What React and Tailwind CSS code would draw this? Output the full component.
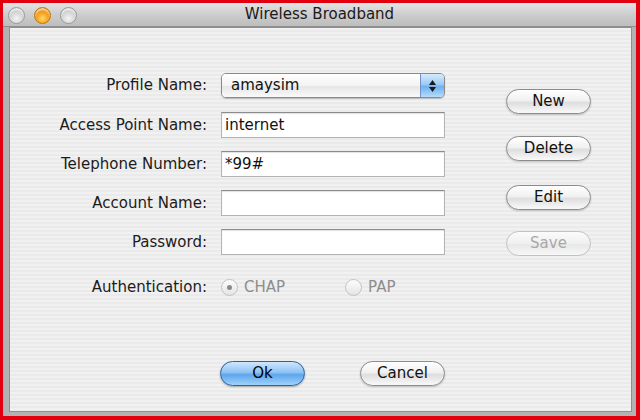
import React from 'react';

const font = { fontFamily: '"DejaVu Sans", Verdana, sans-serif' };

function Light({ orange }) {
  return (
    <span
      className={
        orange
          ? 'block h-[17px] w-[17px] rounded-full border border-[#b9770f] bg-[radial-gradient(circle_at_50%_70%,#ffd66a_0%,#f6a21c_45%,#c86f06_100%)] shadow-[inset_0_2px_2px_rgba(255,255,255,0.7)]'
          : 'block h-[17px] w-[17px] rounded-full border border-[#9a9a9a] bg-[radial-gradient(circle_at_50%_70%,#f4f4f4_0%,#d4d4d4_50%,#a8a8a8_100%)] shadow-[inset_0_2px_2px_rgba(255,255,255,0.8)]'
      }
    />
  );
}

function AquaButton({ children, disabled, primary, className = '' }) {
  const base =
    'flex h-[25px] w-[85px] items-center justify-center rounded-full border text-[15px] leading-none';
  const look = primary
    ? 'border-[#2f5f9e] bg-[linear-gradient(180deg,#cfe7fd_0%,#8ec3f4_45%,#5ea6ec_55%,#9ed2fb_100%)] text-black shadow-[0_1px_2px_rgba(0,0,0,0.3)]'
    : disabled
      ? 'border-[#c2c2c2] bg-[linear-gradient(180deg,#fbfbfb_0%,#f0f0f0_50%,#e8e8e8_55%,#f7f7f7_100%)] text-[#a8a8a8]'
      : 'border-[#8b8b8b] bg-[linear-gradient(180deg,#ffffff_0%,#f1f1f1_45%,#dedede_55%,#f9f9f9_100%)] text-[#111] shadow-[0_1px_2px_rgba(0,0,0,0.2)]';
  return (
    <button type="button" className={`${base} ${look} ${className}`}>
      {children}
    </button>
  );
}

function Row({ label, children, className = '' }) {
  return (
    <div className={`flex items-center ${className}`}>
      <span className="w-[197px] text-right text-[15px] text-[#1c1c1c]">{label}</span>
      <div className="ml-[14px] w-[224px]">{children}</div>
    </div>
  );
}

function Field({ value }) {
  return (
    <div className="flex h-[26px] items-center border border-[#b4b4b4] border-t-[#8c8c8c] bg-white pl-[3px] text-[15px] text-[#111] shadow-[inset_0_1px_1px_rgba(0,0,0,0.12)]">
      {value}
    </div>
  );
}

function Radio({ checked, label }) {
  return (
    <div className="flex items-center gap-[6px] text-[15px] text-[#8d8d8d]">
      <span className="flex h-[17px] w-[17px] items-center justify-center rounded-full border border-[#c3c3c3] bg-[linear-gradient(180deg,#fdfdfd,#e4e4e4)]">
        {checked && <span className="h-[5px] w-[5px] rounded-full bg-[#8a8a8a]" />}
      </span>
      {label}
    </div>
  );
}

export default function App() {
  return (
    <div className="h-[420px] w-[640px] bg-[#e2000e] pb-[4px] pl-[3px] pr-[4px] pt-[3px]" style={font}>
      <div className="flex h-full flex-col bg-[#b2b2b2]">
        {/* title bar */}
        <div className="relative flex h-[24px] shrink-0 items-center justify-center border-b border-[#8e8e8e] bg-[linear-gradient(180deg,#e4e4e4_0%,#cdcdcd_50%,#bdbdbd_100%)]">
          <div className="absolute left-[5px] top-[4px] flex gap-[9px]">
            <Light />
            <Light orange />
            <Light />
          </div>
          <span className="text-[15px] text-[#1a1a1a]">Wireless Broadband</span>
        </div>

        {/* content */}
        <div className="flex-1 pb-[4px] pl-[6px] pr-[4px]">
          <div className="flex h-full flex-col border border-[#8f8f8f] bg-[repeating-linear-gradient(180deg,#f1f1f1_0px,#f1f1f1_2px,#eaeaea_2px,#eaeaea_4px)]">
            <div className="flex pt-[45px]">
              <div className="w-[435px]">
                <Row label="Profile Name:">
                  <div className="flex h-[25px] overflow-hidden rounded-[5px] border border-[#8a8a8a] shadow-[0_1px_1px_rgba(0,0,0,0.2)]">
                    <div className="flex flex-1 items-center bg-[linear-gradient(180deg,#ffffff_0%,#f3f3f3_50%,#e6e6e6_55%,#fafafa_100%)] pl-[9px] text-[15px] text-[#111]">
                      amaysim
                    </div>
                    <div className="flex w-[24px] flex-col items-center justify-center gap-[2px] border-l border-[#6f93c6] bg-[linear-gradient(180deg,#d6ebfd_0%,#9ccaf5_45%,#6fb0ee_55%,#b5dcfc_100%)]">
                      <svg width="7" height="5" viewBox="0 0 7 5">
                        <path d="M3.5 0 L7 5 L0 5 Z" fill="#1a1a1a" />
                      </svg>
                      <svg width="7" height="5" viewBox="0 0 7 5">
                        <path d="M0 0 L7 0 L3.5 5 Z" fill="#1a1a1a" />
                      </svg>
                    </div>
                  </div>
                </Row>
                <Row label="Access Point Name:" className="mt-[14px]">
                  <Field value="internet" />
                </Row>
                <Row label="Telephone Number:" className="mt-[13px]">
                  <Field value="*99#" />
                </Row>
                <Row label="Account Name:" className="mt-[13px]">
                  <Field value="" />
                </Row>
                <Row label="Password:" className="mt-[13px]">
                  <Field value="" />
                </Row>
                <Row label="Authentication:" className="mt-[19px] h-[26px]">
                  <div className="flex items-center">
                    <Radio checked label="CHAP" />
                    <div className="ml-[60px]">
                      <Radio label="PAP" />
                    </div>
                  </div>
                </Row>
              </div>
              <div className="ml-[61px] flex flex-col pt-[16px]">
                <AquaButton>New</AquaButton>
                <AquaButton className="mt-[22px]">Delete</AquaButton>
                <AquaButton className="mt-[24px]">Edit</AquaButton>
                <AquaButton disabled className="mt-[21px]">Save</AquaButton>
              </div>
            </div>
            <div className="mt-[61px] flex pl-[210px]">
              <AquaButton primary>Ok</AquaButton>
              <AquaButton className="ml-[55px] w-[84px]">Cancel</AquaButton>
            </div>
          </div>
        </div>
      </div>
    </div>
  );
}
